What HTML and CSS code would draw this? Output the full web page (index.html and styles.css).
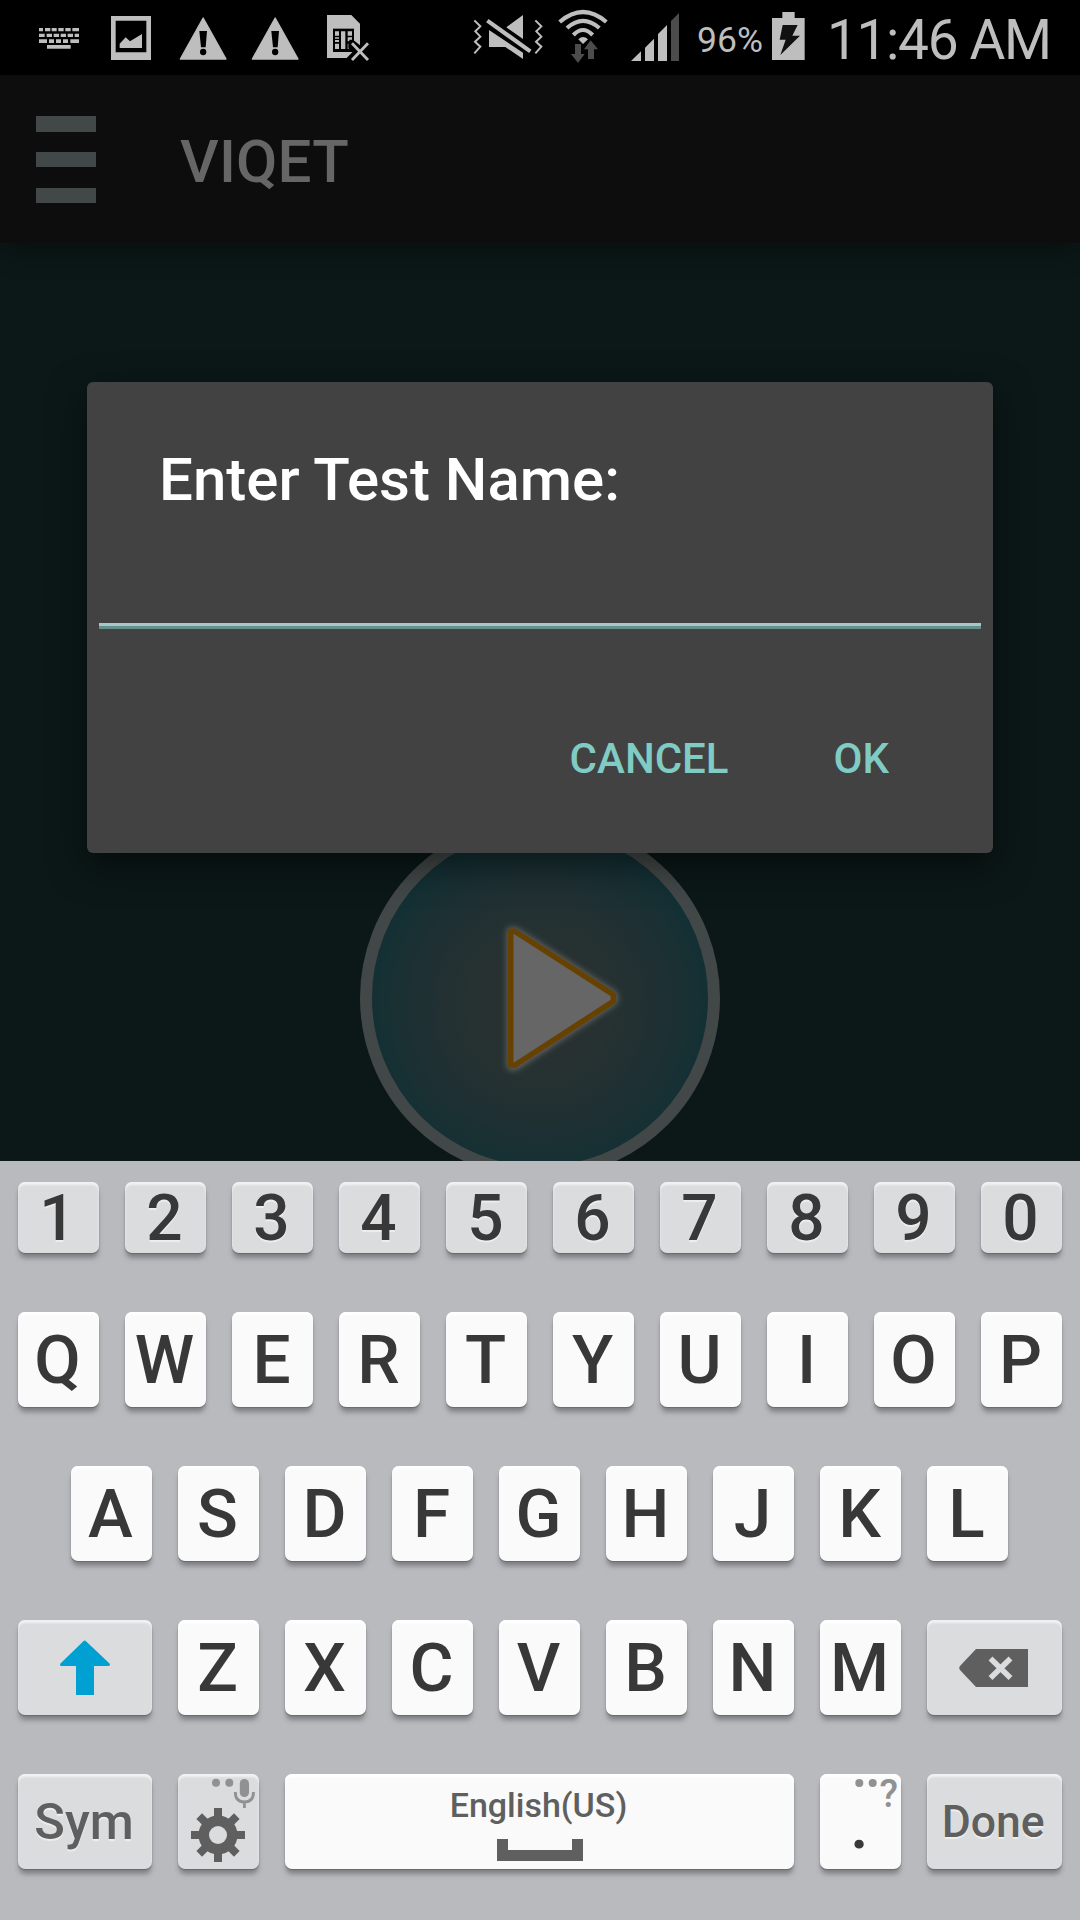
FILE: index.html
```html
<!DOCTYPE html>
<html lang="en">
<head>
<meta charset="utf-8">
<title>VIQET</title>
<link rel="stylesheet" href="styles.css">
</head>
<body>
<header class="status">
  <svg class="ic-keyboard" width="40" height="75" viewBox="117 0 120 225" fill="#bebebe"><path d="M117 84h12v10h-12zM135 84h16v10h-16zM155 84h15v10h-15zM175 84h16v10h-16zM196 84h16v10h-16zM217 84h20v10h-20zM117 101h17v10h-17zM140 101h16v10h-16zM161 101h16v10h-16zM182 101h16v10h-16zM203 101h16v10h-16zM224 101h13v10h-13zM117 118h24v11h-24zM147 118h15v11h-15zM168 118h15v11h-15zM189 118h15v11h-15zM211 118h26v11h-26zM141 135h71v11h-71z"/></svg>
  <svg class="ic-picture" width="40" height="75" viewBox="333 0 120 225" fill="#bebebe"><path fill-rule="evenodd" d="M333 48h120v132H333zM347 62v95h92V62z"/><path d="M359 144v-13l18-19 13 12 36-22v42z"/></svg>
  <svg class="ic-warn" width="48" height="75" viewBox="538 0 144 225"><path d="M610.500 54 679 177H542z" fill="#bebebe" stroke="#bebebe" stroke-width="4" stroke-linejoin="round"/><path d="M599 93h23l-4 49h-14z"/><circle cx="610.500" cy="156" r="9.500"/></svg>
  <svg class="ic-warn2" width="48" height="75" viewBox="538 0 144 225"><path d="M610.500 54 679 177H542z" fill="#bebebe" stroke="#bebebe" stroke-width="4" stroke-linejoin="round"/><path d="M599 93h23l-4 49h-14z"/><circle cx="610.500" cy="156" r="9.500"/></svg>
  <svg class="ic-sim" width="43" height="75" viewBox="981 0 129 225"><path d="M981 45h73l26 26v103H981z" fill="#bebebe"/><path d="M999 86h63v70h-63z"/><path d="M1005 94h12v13h-12zM1005 112h12v4h-12zM1005 120h12v6h-12zM1005 131h12v16h-12zM1023 94h13v53h-13zM1043 94h13v13h-13zM1043 112h13v7h-8v5h-5zM1043 131h6v16h-6z" fill="#bebebe"/><path d="M1040 174l17-17-12-12v-14l12-13 22 17 10-10v49z"/><path d="M1056 130l48 50M1104 130l-48 50" stroke="#bebebe" stroke-width="8.500"/></svg>
  <svg class="ic-mute" width="71" height="75" viewBox="99 0 213 225" fill="#bebebe"><path d="M103 61l18 18-15 15 15 16-16 15 16 15-18 20M286 61l18 18-15 15 15 16-16 15 16 15-18 20" fill="none" stroke="#bebebe" stroke-width="6"/><path d="M199 82l50-37v72zM147 90l102 68v19l-53-36h-49z"/><path d="M142 62l129 92" stroke="#bebebe" stroke-width="12.500"/></svg>
  <svg class="ic-wifi" width="50" height="75" viewBox="354 0 150 225"><path d="M359 66Q429 6 499 66M381 84Q429 41 478 84M400 105Q429 75 458 105" fill="none" stroke="#bebebe" stroke-width="12.500"/><path d="M415 118q14-14 29 0l-15 14z" fill="#bebebe"/><path d="M405 132h18v30h11l-20 27-21-27h12zM452 121l22 27h-12v29h-18v-29h-12z" fill="#4c4c4c"/></svg>
  <svg class="ic-signal" width="48" height="75" viewBox="573 0 144 225" fill="#bebebe"><path d="M573 183l30-29v29zM615 183v-40l27-27v67zM654 183v-81l27-27v108z"/><path d="M693 183V63l24-24v144z" fill="#4c4c4c"/></svg>
  <span class="percent">96%</span>
  <svg class="ic-battery" width="33" height="75" viewBox="36 0 99 225"><path d="M36 54h31V36h37v18h30v126H36z" fill="#bebebe"/><path d="M68 75h45l-16 32h23l-59 58 16-46H59z" fill="#111"/></svg>
  <span class="clock">11:46 AM</span>
</header>

<main class="app">
  <div class="appbar">
    <div class="burger"><i></i><i></i><i></i></div>
    <h1>VIQET</h1>
  </div>
  <svg class="play" width="360" height="360" viewBox="0 0 360 360">
    <defs>
      <radialGradient id="disc" cx=".5" cy=".52" r=".52"><stop offset="0" stop-color="#2a3030"/><stop offset=".4" stop-color="#263131"/><stop offset=".7" stop-color="#1e3033"/><stop offset="1" stop-color="#113035"/></radialGradient>
      <filter id="glow" x="-20%" y="-20%" width="140%" height="140%"><feGaussianBlur stdDeviation="3"/></filter>
    </defs>
    <circle cx="180" cy="180" r="174" fill="url(#disc)" stroke="#424847" stroke-width="12"/>
    <path d="M151 113.500h4L253.500 177q1 3 0 6L155 248h-4z" fill="#666" stroke="#666" stroke-width="8" stroke-linejoin="round" filter="url(#glow)"/>
    <path d="M150.700 114q0-.7 1-.7h3L253 176.500q1 4 0 7L154.700 247.300h-3q-1 0-1-.7z" fill="#666" stroke="#674100" stroke-width="5.500" stroke-linejoin="round"/>
  </svg>
  <section class="dialog">
    <h2>Enter Test Name:</h2>
    <div class="field"></div>
    <div class="actions"><button>CANCEL</button><button>OK</button></div>
  </section>
</main>

<section class="keyboard">
  <div class="row digits"><b>1</b><b>2</b><b>3</b><b>4</b><b>5</b><b>6</b><b>7</b><b>8</b><b>9</b><b>0</b></div>
  <div class="row"><b>Q</b><b>W</b><b>E</b><b>R</b><b>T</b><b>Y</b><b>U</b><b>I</b><b>O</b><b>P</b></div>
  <div class="row home"><b>A</b><b>S</b><b>D</b><b>F</b><b>G</b><b>H</b><b>J</b><b>K</b><b>L</b></div>
  <div class="row">
    <b class="wide fn"><svg width="134" height="95" viewBox="0 0 134 95"><path d="M66.700 22 90.500 44.500H76v30.500H58V44.500H43.500z" fill="#00a1d2"/><path d="M66.700 22 90.500 44.500h-47z" fill="#00a1d2" stroke="#00a1d2" stroke-width="3" stroke-linejoin="round"/></svg></b>
    <b>Z</b><b>X</b><b>C</b><b>V</b><b>B</b><b>N</b><b>M</b>
    <b class="wide fn"><svg width="134" height="95" viewBox="0 0 134 95"><path d="M49 29h52v38H49L33 50q-1.500-2 0-4z" fill="#5f5f5f"/><path d="M63.500 38.500l20 19.500M83.500 38.500 63.500 58" stroke="#dbdcde" stroke-width="5.500"/></svg></b>
  </div>
  <div class="row">
    <b class="wide fn sym">Sym</b>
    <b class="fn"><svg width="81" height="95" viewBox="0 0 81 95"><g fill="#909193"><circle cx="38" cy="8.700" r="4"/><circle cx="51.300" cy="8.700" r="4"/><rect x="61.800" y="5" width="9.200" height="18" rx="4.600"/></g><path d="M57.300 18q0 10 9.100 10t9.100-10M66.400 28v6" fill="none" stroke="#909193" stroke-width="2.800"/><g stroke="#5f5f5f" stroke-width="8"><path d="M40 34v54M13 61h54M21.200 42.200l37.600 37.600M58.800 42.200 21.200 79.800"/></g><circle cx="40" cy="61" r="19.500" fill="#5f5f5f"/><circle cx="40" cy="61" r="9" fill="#dbdcde"/></svg></b>
    <b class="space"><span>English(US)</span><svg width="86" height="22" viewBox="0 0 86 22"><path d="M0 0h11v11h64V0h11v22H0z" fill="#5f5f5f"/></svg></b>
    <b class="dot">.<span class="alt"><svg width="22" height="10" viewBox="0 0 22 10" fill="#909193"><circle cx="4.300" cy="5" r="4"/><circle cx="17.700" cy="5" r="4"/></svg><span>?</span></span></b>
    <b class="wide fn done">Done</b>
  </div>
</section>
</body>
</html>
```
FILE: styles.css
```css
* { box-sizing: border-box; margin: 0; padding: 0; }
body { width: 1080px; height: 1920px; overflow: hidden; background: #000; font-family: Roboto, "Liberation Sans", sans-serif; display: flex; flex-direction: column; }
svg { display: block; flex: none; }

.status { height: 75px; flex: none; display: flex; padding-left: 39px; color: #bebebe; background: #000; white-space: nowrap; }
.ic-picture { margin-left: 32px; }
.ic-warn { margin-left: 28px; }
.ic-warn2 { margin-left: 24px; }
.ic-sim { margin-left: 28px; }
.ic-mute { margin-left: 103px; }
.ic-wifi { margin-left: 14px; }
.ic-signal { margin-left: 23px; }
.percent { width: 75px; margin-left: 18px; font-size: 35.5px; line-height: 80px; }
.clock { margin-left: 22px; font-size: 55px; line-height: 81px; letter-spacing: -1.35px; }

.app { position: relative; height: 1086px; flex: none; overflow: hidden; background: #0b1817; display: flex; flex-direction: column; align-items: center; }
.appbar { width: 100%; height: 168px; flex: none; display: flex; padding-left: 36px; background: #0d0d0d; box-shadow: 0 8px 24px rgba(0, 0, 0, .35); }
.burger { width: 60px; height: 87px; margin-top: 41px; display: flex; flex-direction: column; justify-content: space-between; }
.burger i { height: 15.5px; background: #424847; }
.appbar h1 { margin-left: 84px; font-size: 60px; font-weight: 500; line-height: 173px; letter-spacing: .15px; color: #666; }
.play { margin-top: 574.5px; }

.dialog { position: absolute; left: 87px; top: 307px; width: 906px; height: 471px; border-radius: 6px; background: #424242; box-shadow: 0 12px 36px rgba(0, 0, 0, .5); display: flex; flex-direction: column; }
.dialog h2 { padding: 62px 0 0 72px; height: 241px; font-size: 60px; font-weight: 500; line-height: 71px; color: #fff; }
.field { height: 6px; margin: 0 12px; background: #66908c; border-top: 3px solid #a6c9c8; }
.actions { display: flex; justify-content: flex-end; gap: 105px; padding: 105px 104px 0 0; }
.actions button { border: 0; background: none; font: 500 42px/49px Roboto, sans-serif; color: #80cbc4; }

.keyboard { height: 759px; flex: none; background: #b9babe; padding-top: 21px; display: flex; flex-direction: column; gap: 59px; }
.row { display: flex; gap: 26px; height: 95px; padding-left: 18px; }
.row.home { padding-left: 71px; }
.row b { position: relative; flex: none; width: 81px; height: 95px; padding-right: 2px; border-radius: 7px; background: #fafafa; color: #383838; text-align: center; font-size: 67.5px; font-weight: 500; line-height: 96px; box-shadow: inset 0 3px 2px #fff, 0 1px 1px #6a6a6c, 0 6px 5px -1px rgba(80, 80, 86, .55); }
.row .fn, .digits b { background: #dbdcde; box-shadow: inset 0 3px 2px #f0f1f2, 0 1px 1px #6a6a6c, 0 6px 5px -1px rgba(80, 80, 86, .55); }
.digits { height: 71px; }
.row.digits b { height: 71px; font-size: 64px; line-height: 74px; text-shadow: 0 2px 1px #eee; }
.row .wide { width: 134.5px; color: #5f5f5f; text-shadow: 0 2px 1px #eee; }
.row .wide:first-child { width: 134px; }
.row .sym { font-size: 50.5px; }
.row .done { font-size: 44.5px; line-height: 97px; }
.row .space { width: 509px; display: flex; flex-direction: column; align-items: center; font-size: 34px; line-height: 39px; color: #5f5f5f; padding-top: 12px; padding-right: 0; gap: 14px; }
.space span { margin-right: 2px; }
.row .dot { line-height: 102px; }
.alt { position: absolute; right: 3px; top: 4px; display: flex; gap: 3px; font-size: 38px; line-height: 32px; color: #909193; }
```
